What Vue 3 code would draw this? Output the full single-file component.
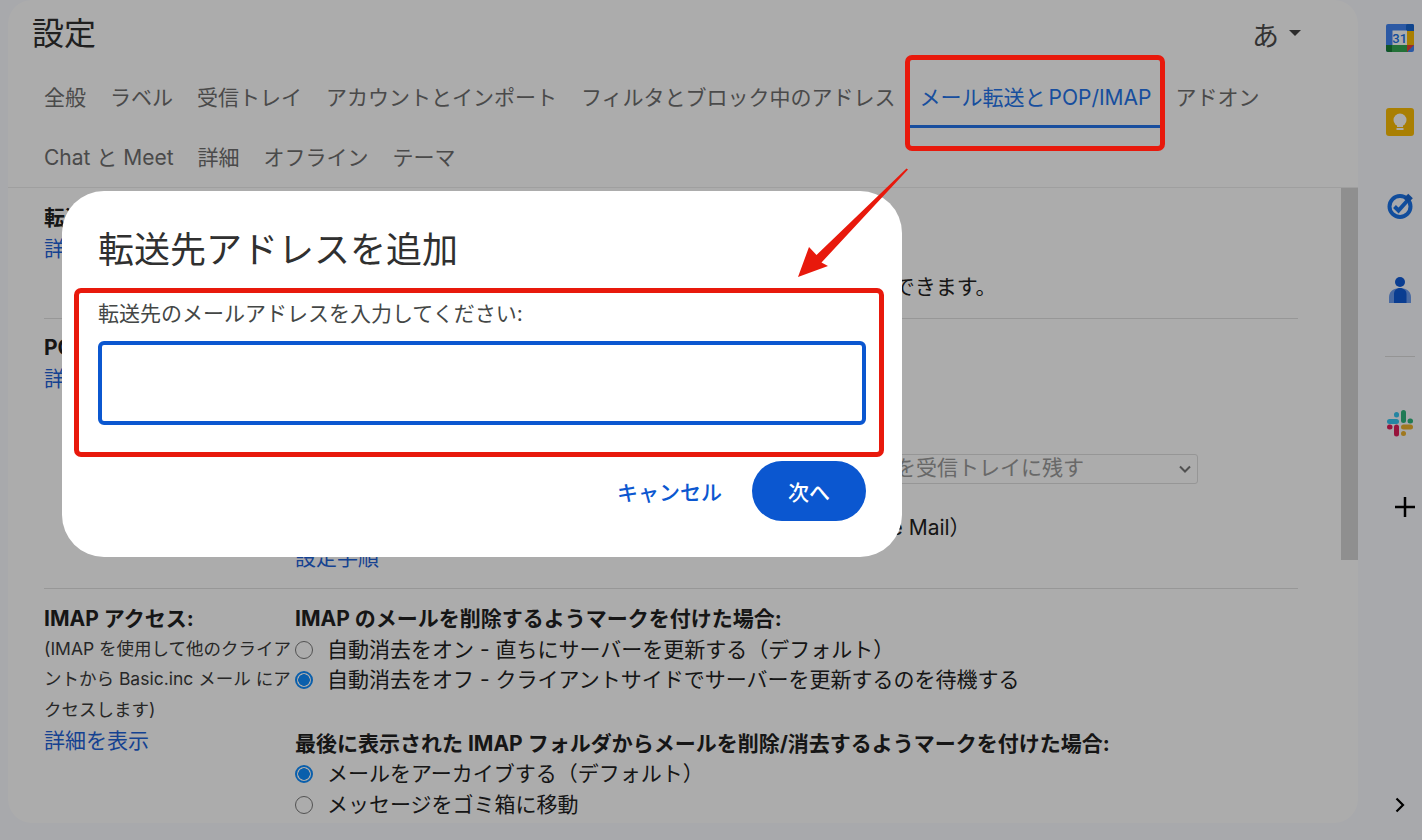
<script setup>
const row1 = ['全般', 'ラベル', '受信トレイ', 'アカウントとインポート', 'フィルタとブロック中のアドレス']
const row2 = ['アドオン', 'Chat と Meet', '詳細', 'オフライン', 'テーマ']
</script>

<template>
  <div class="page">
    <main class="card">
      <header class="head">
        <h1 class="title">設定</h1>
        <div class="lang"><span>あ</span><i class="caret"></i></div>
      </header>
      <nav class="tabs">
        <a v-for="t in row1" :key="t" class="tab">{{ t }}</a>
        <a class="tab active">メール転送と POP/IMAP</a>
        <a v-for="t in row2" :key="t" class="tab">{{ t }}</a>
      </nav>
      <div class="body">
        <div class="content">
          <section class="row r1">
            <div class="lab">
              <b>転送:</b>
              <a class="link">詳細を表示</a>
            </div>
            <div class="val">
              <button class="plain">転送先アドレスを追加</button>
              <p class="hint">ヒント: フィルタを作成すると、特定のメールだけを自動で転送できます。</p>
            </div>
          </section>
          <section class="row r2">
            <div class="lab">
              <b>POP ダウンロード:</b>
              <a class="link">詳細を表示</a>
            </div>
            <div class="val">
              <p><b>1. ステータス: POP は無効です</b></p>
              <p class="sp30">すべてのメールで POP を有効にする</p>
              <p class="sp30">今後受信するメールで POP を有効にする</p>
              <div class="popline">
                <span>2. POP でメールにアクセスする場合</span>
                <div class="select"><span>Gmail のメールを受信トレイに残す</span><svg width="14" height="14" viewBox="0 0 14 14"><path d="M2 4.500 7 9.500 12 4.500" fill="none" stroke="#777" stroke-width="2"/></svg></div>
              </div>
              <p class="client">3. メール クライアントでの設定（Outlook、Eudora、Netscape Mail）</p>
              <a class="link">設定手順</a>
            </div>
          </section>
          <section class="row r3">
            <div class="lab">
              <b>IMAP アクセス:</b>
              <span class="small">(IMAP を使用して他のクライアントから Basic.inc メール にアクセスします)</span>
              <a class="link">詳細を表示</a>
            </div>
            <div class="val">
              <p><b>IMAP のメールを削除するようマークを付けた場合:</b></p>
              <label class="radio"><i class="dot"></i>自動消去をオン - 直ちにサーバーを更新する（デフォルト）</label>
              <label class="radio"><i class="dot on"></i>自動消去をオフ - クライアントサイドでサーバーを更新するのを待機する</label>
              <p class="second"><b>最後に表示された IMAP フォルダからメールを削除/消去するようマークを付けた場合:</b></p>
              <label class="radio"><i class="dot on"></i>メールをアーカイブする（デフォルト）</label>
              <label class="radio"><i class="dot"></i>メッセージをゴミ箱に移動</label>
            </div>
          </section>
        </div>
        <div class="track"><div class="thumb"></div></div>
      </div>
    </main>

    <aside class="side">
      <div class="side-top">
        <svg class="ic cal" width="28" height="28" viewBox="0 0 28 28">
          <rect x="0" y="0" width="28" height="28" rx="2" fill="#4285f4"/>
          <rect x="20" y="0" width="8" height="8" fill="#1967d2" rx="1.500"/>
          <rect x="20" y="7" width="8" height="14" fill="#fbbc04"/>
          <rect x="6" y="21" width="16" height="7" fill="#34a853"/>
          <path d="M0 21h6v7H2a2 2 0 0 1-2-2z" fill="#188038"/>
          <path d="M21 28v-7h7z" fill="#ea4335"/>
          <rect x="6.500" y="6.500" width="14.500" height="14.500" fill="#fff"/>
          <text x="13.700" y="18.500" class="cal-text">31</text>
        </svg>
        <svg class="ic" width="28" height="28" viewBox="0 0 28 28">
          <rect width="28" height="28" rx="3" fill="#fbbc04"/>
          <circle cx="14" cy="12" r="6.500" fill="#fff"/>
          <rect x="11" y="16" width="6" height="3" fill="#fff"/>
          <rect x="10.500" y="20" width="7" height="2" fill="#fff"/>
        </svg>
        <svg class="ic" width="28" height="28" viewBox="0 0 28 28">
          <circle cx="14" cy="14.500" r="10.500" fill="none" stroke="#1a73e8" stroke-width="4"/>
          <path d="M8.500 14.500l4 4 9-10" fill="none" stroke="#1a73e8" stroke-width="4"/>
          <rect x="19" y="3" width="6.500" height="6.500" transform="rotate(45 22.250 6.250)" fill="#1967d2"/>
        </svg>
        <svg class="ic" width="28" height="28" viewBox="0 0 28 28">
          <path d="M3 27v-6c0-4.500 4-8.500 8-8.500h6c4 0 8 4 8 8.500v6z" fill="#6d9df0"/>
          <circle cx="14" cy="6" r="5" fill="#0f5bd8"/>
          <path d="M8 27v-9c0-3.500 2.500-6 6-6s6.500 2.500 6.500 6v9z" fill="#0f5bd8"/>
        </svg>
        <div class="side-rule"></div>
        <svg class="ic slack" width="28" height="28" viewBox="0 0 28 28">
          <rect x="1" y="10" width="12" height="5" rx="2.500" fill="#36c5f0"/>
          <rect x="8" y="3" width="5" height="5.500" rx="2.500" fill="#36c5f0"/>
          <rect x="15" y="1" width="5" height="13" rx="2.500" fill="#2eb67d"/>
          <rect x="21.500" y="9.500" width="5.500" height="5" rx="2.500" fill="#2eb67d"/>
          <rect x="8" y="15.500" width="5" height="12" rx="2.500" fill="#e01e5a"/>
          <rect x="1" y="15.500" width="5.500" height="5" rx="2.500" fill="#e01e5a"/>
          <rect x="15" y="15.500" width="12" height="5" rx="2.500" fill="#ecb22e"/>
          <rect x="15" y="22" width="5" height="5" rx="2.500" fill="#ecb22e"/>
        </svg>
        <svg class="plus" width="20" height="20" viewBox="0 0 20 20"><path d="M10 0v20M0 10h20" stroke="#000" stroke-width="2.500"/></svg>
      </div>
      <svg class="chev" width="12" height="16" viewBox="0 0 12 16"><path d="M2.500 1.500 9 8l-6.500 6.500" fill="none" stroke="#000" stroke-width="2.200"/></svg>
    </aside>

    <div class="scrim"></div>

    <div class="modal">
      <h2 class="m-title">転送先アドレスを追加</h2>
      <label class="m-label">転送先のメールアドレスを入力してください:</label>
      <input class="m-input" type="text" />
      <div class="m-actions">
        <button class="m-cancel">キャンセル</button>
        <button class="m-next">次へ</button>
      </div>
    </div>

    <div class="mark mark-tab"></div>
    <div class="mark mark-field"></div>
    <svg class="arrow" width="1422" height="840" viewBox="0 0 1422 840">
      <polygon points="908,169.500 821.500,262.500 828,266 798,277 809,247 816.500,255 906.500,168.500" fill="#e8190c"/>
    </svg>
  </div>
</template>

<style>
html, body { margin: 0; padding: 0; }
</style>

<style scoped>
.page {
  position: relative;
  display: flex;
  width: 1422px;
  height: 840px;
  overflow: hidden;
  background: #fafbff;
  font-family: Inter, "Noto Sans CJK JP", sans-serif;
  color: #222;
}
.card {
  display: flex;
  flex-direction: column;
  width: 1350px;
  height: 823px;
  margin-left: 8px;
  background: #fff;
  border-radius: 24px;
  overflow: hidden;
  flex: none;
}
.head {
  display: flex;
  justify-content: space-between;
  align-items: center;
  height: 68px;
  padding: 0 57px 0 24px;
  flex: none;
}
.title {
  margin: 0;
  font-size: 32px;
  font-weight: 400;
  color: #303030;
  line-height: 68px;
}
.lang {
  display: flex;
  align-items: center;
  gap: 10px;
  font-size: 27px;
  color: #4c4c4c;
}
.caret {
  width: 0;
  height: 0;
  border: 6px solid transparent;
  border-top: 6px solid #444;
  border-bottom: 0;
  margin-bottom: 3px;
}
.tabs {
  display: flex;
  flex-wrap: wrap;
  align-content: flex-start;
  flex: none;
  padding-left: 36px;
  column-gap: 24px;
  height: 119px;
  border-bottom: 1px solid #ececec;
}
.tab {
  display: block;
  height: 60px;
  line-height: 60px;
  font-size: 21px;
  color: #6e6e6e;
  white-space: nowrap;
}
.active {
  color: #2474ea;
  margin: 0 -12px;
  padding: 0 12px;
  word-spacing: -3px;
  box-shadow: inset 0 -3px 0 #2474ea;
}
.body {
  display: flex;
  flex: 1;
  min-height: 0;
}
.content {
  flex: 1;
  min-width: 0;
  padding: 0 43px 0 36px;
}
.track {
  width: 17px;
  flex: none;
}
.thumb {
  height: 372px;
  background: #d4d4d4;
}
.row {
  display: flex;
  border-bottom: 1px solid #e0e0e0;
  box-sizing: border-box;
  font-size: 21px;
  line-height: 30.500px;
}
.r1 { height: 131px; padding-top: 15px; }
.r2 { height: 270px; padding-top: 14px; }
.r3 { border-bottom: 0; padding-top: 15px; }
.lab {
  display: flex;
  flex-direction: column;
  align-items: flex-start;
  width: 251px;
  flex: none;
  color: #222;
}
.lab b, .val b { font-weight: 700; font-size: 21px; color: #222; }
.val { flex: 1; min-width: 0; }
.val p { margin: 0; }
.link { color: #1f62d8; }
.small {
  font-size: 17.500px;
  line-height: 30.700px;
  margin-top: -1px;
  color: #3a3a3a;
}
.plain {
  height: 30px;
  padding: 0;
  border: 0;
  background: none;
  font: inherit;
}
.hint { margin-top: 38px !important; }
.sp30 { line-height: 30px; }
.popline {
  display: flex;
  align-items: center;
  justify-content: space-between;
  margin-top: 29px;
  height: 32px;
  padding-right: 100px;
}
.select {
  display: flex;
  align-items: center;
  justify-content: space-between;
  width: 468px;
  height: 30px;
  box-sizing: border-box;
  padding: 0 5px 0 18px;
  border: 1px solid #dedede;
  border-radius: 3px;
  color: #9a9a9a;
}
.client { margin-top: 28px !important; }
.second { margin-top: 33px !important; }
.radio {
  display: flex;
  align-items: center;
  height: 30.500px;
  color: #222;
}
.dot {
  position: relative;
  width: 18px;
  height: 18px;
  box-sizing: border-box;
  margin: 0 14px 0 0;
  border: 1.500px solid #7a7a7a;
  border-radius: 50%;
  flex: none;
}
.dot.on {
  border: 2px solid #0f8dff;
  background: radial-gradient(circle, #0f8dff 5.500px, transparent 6px);
}
.side {
  position: relative;
  flex: 1;
  display: flex;
  flex-direction: column;
  align-items: center;
}
.side-top {
  display: flex;
  flex-direction: column;
  align-items: center;
  padding: 24px 0 0 20px;
}
.ic { display: block; margin-bottom: 56px; flex: none; }
.side-rule {
  width: 30px;
  height: 1px;
  background: #dcdcdc;
  margin: -4px 0 52px;
}
.slack { margin-bottom: 60px; }
.plus { display: block; margin-left: 10px; }
.cal-text {
  font-family: Roboto, sans-serif;
  font-size: 13px;
  font-weight: 500;
  fill: #1a73e8;
  text-anchor: middle;
}
.chev { position: absolute; left: 36px; top: 797px; }
.scrim {
  position: absolute;
  inset: 0;
  background: rgba(0, 0, 0, 0.325);
}
.modal {
  position: absolute;
  left: 62px;
  top: 191px;
  width: 840px;
  height: 366px;
  box-sizing: border-box;
  padding: 35px 36px 0;
  background: #fff;
  border-radius: 42px;
  display: flex;
  flex-direction: column;
}
.m-title {
  margin: 0;
  font-size: 36px;
  line-height: 48px;
  font-weight: 400;
  color: #303030;
}
.m-label {
  margin-top: 25px;
  font-size: 21px;
  line-height: 30px;
  color: #444746;
}
.m-input {
  display: block;
  box-sizing: border-box;
  width: 768px;
  height: 84px;
  margin-top: 12px;
  border: 4px solid #0b57d0;
  border-radius: 6px;
  outline: none;
  background: #fff;
}
.m-actions {
  display: flex;
  justify-content: flex-end;
  align-items: center;
  gap: 30px;
  margin-top: 36px;
}
.m-cancel, .m-next {
  border: 0;
  padding: 0;
  font-family: inherit;
  font-size: 21px;
  font-weight: 500;
}
.m-cancel { background: none; color: #0b57d0; }
.m-next {
  width: 114px;
  height: 60px;
  border-radius: 30px;
  background: #0b57d0;
  color: #fff;
}
.mark {
  position: absolute;
  box-sizing: border-box;
  border: 5px solid #e8190c;
  border-radius: 7px;
  pointer-events: none;
}
.mark-tab { left: 905px; top: 55px; width: 260px; height: 96px; }
.mark-field { left: 74px; top: 288px; width: 810px; height: 169px; }
.arrow { position: absolute; left: 0; top: 0; pointer-events: none; }
</style>
